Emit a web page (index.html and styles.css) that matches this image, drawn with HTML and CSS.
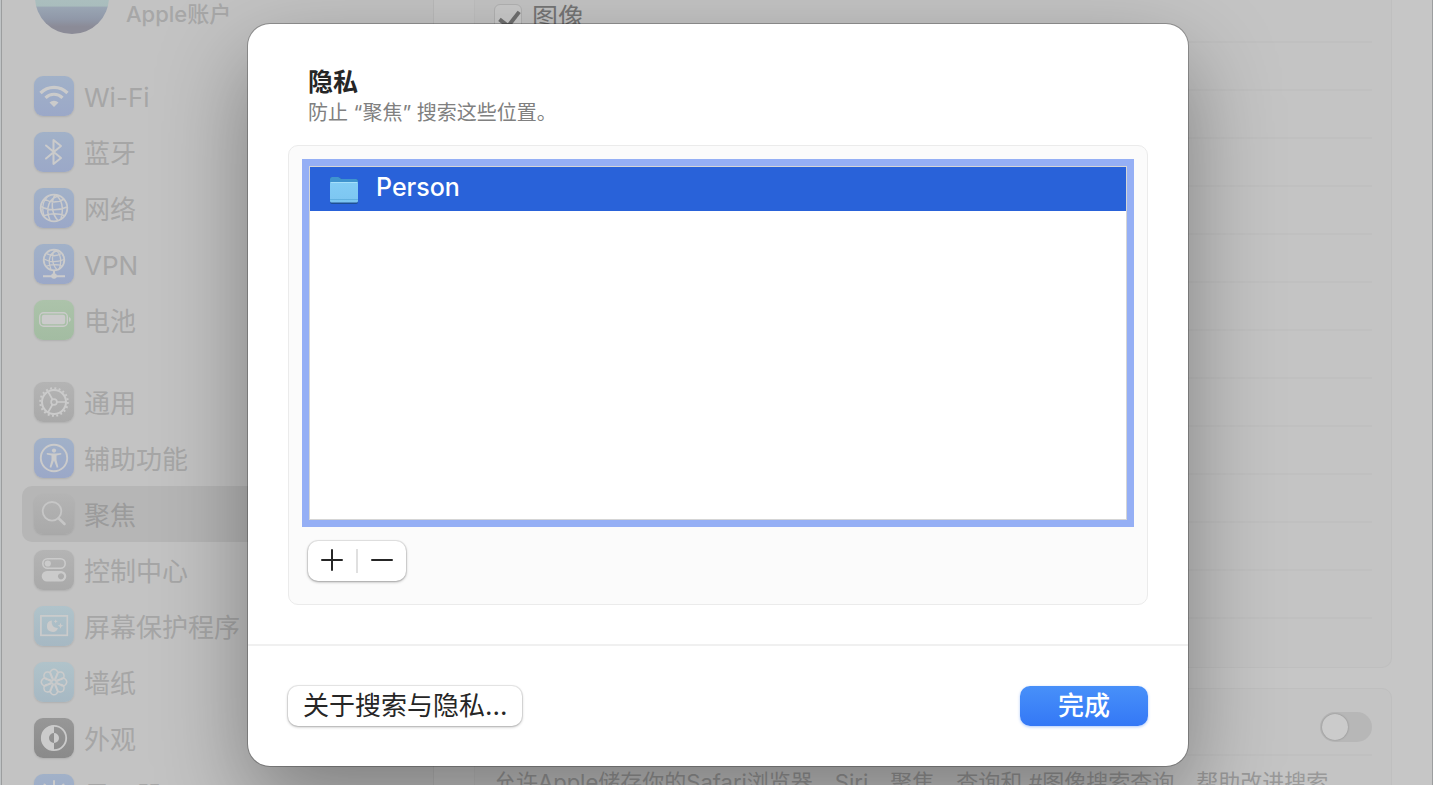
FILE: index.html
```
<!DOCTYPE html>
<html lang="zh-CN">
<head>
  <meta charset="UTF-8" />
  <meta name="viewport" content="width=device-width, initial-scale=1.0" />
  <title>聚焦</title>
  <link rel="stylesheet" href="styles.css">
</head>
<body>
  <div class="window">
    <!-- Sidebar -->
    <nav class="sidebar">
      <a class="account" href="#">
        <span class="avatar"></span>
        <span>Apple账户</span>
      </a>
      <ul class="menu">
        <li><a class="item" href="#">
          <span class="icon blue"><svg viewBox="0 0 40 40"><g fill="none" stroke="#cbcbcb" stroke-width="3.2"><path d="M6.500 17a19 19 0 0 1 27 0"/><path d="M11.500 21.800a12 12 0 0 1 17 0"/></g><path d="M15.500 26.500a6.500 6.500 0 0 1 9 0L20 31z" fill="#cbcbcb"/></svg></span>
          <span class="label">Wi-Fi</span></a></li>
        <li><a class="item" href="#">
          <span class="icon blue"><svg viewBox="0 0 40 40"><path d="M12 13.500l15 12.500-7.500 6V8l7.500 6-15 12.500" fill="none" stroke="#cbcbcb" stroke-width="2" stroke-linejoin="round" stroke-linecap="round"/></svg></span>
          <span class="label">蓝牙</span></a></li>
        <li><a class="item" href="#">
          <span class="icon blue"><svg viewBox="0 0 40 40"><g fill="none" stroke="#cbcbcb" stroke-width="1.500"><circle cx="20" cy="20" r="13.300" stroke-width="1.800"/><path d="M25 7.700C15 10 11 20 16 32.500M21 6.700c-4 7-4 18 3 26M21 6.700c7 4 9 14 6 24M10.500 11c6 4 13 4 20 0M7 18.500c8 4.500 19 4 26 .5M9.500 28c6-3 15-3 21-.5M15 7.500C9 12 7.500 20 10 28"/></g></svg></span>
          <span class="label">网络</span></a></li>
        <li><a class="item" href="#">
          <span class="icon blue"><svg viewBox="0 0 40 40"><g fill="none" stroke="#cbcbcb" stroke-width="1.300"><circle cx="20" cy="16" r="10.300" stroke-width="1.800"/><path d="M24 6.500C16 8 13 16 17 25.500M20.500 5.700c-3 6-3 14 2.500 20M21 5.700c5.500 3 7 11 4.500 18.500M12.500 9.500c5 3 10 3 15 0M10 15c6 3.500 14 3 20 .5M12 22.500c4.500-2.500 11.500-2.500 16-.5"/><path d="M20 26v5M9 32.200h22" stroke-width="2"/></g><circle cx="20" cy="32" r="2.800" fill="#cbcbcb"/></svg></span>
          <span class="label">VPN</span></a></li>
        <li><a class="item" href="#">
          <span class="icon green"><svg viewBox="0 0 40 40"><rect x="5.700" y="12.700" width="27.600" height="13.600" rx="4" fill="none" stroke="#cbcbcb" stroke-width="1.400"/><rect x="7.800" y="14.800" width="23.400" height="9.400" rx="2.200" fill="#cbcbcb"/><path d="M35 17c2.300.8 2.300 4.200 0 5z" fill="#cbcbcb"/></svg></span>
          <span class="label">电池</span></a></li>
      </ul>
      <ul class="menu">
        <li><a class="item" href="#">
          <span class="icon gray"><svg viewBox="0 0 40 40"><g fill="none" stroke="#cbcbcb"><circle cx="20" cy="20" r="13.800" stroke-width="2" stroke-dasharray="1.900 2.435"/><circle cx="20" cy="20" r="12" stroke-width="2"/><circle cx="20" cy="20" r="2.900" stroke-width="1.600"/><path d="M23 20h9M18.500 17.500l-4.500-8M18.500 22.500l-4.500 8" stroke-width="1.700"/></g></svg></span>
          <span class="label">通用</span></a></li>
        <li><a class="item" href="#">
          <span class="icon blue"><svg viewBox="0 0 40 40"><circle cx="20" cy="20" r="13.200" fill="none" stroke="#cbcbcb" stroke-width="1.900"/><circle cx="20" cy="12.600" r="2.100" fill="#cbcbcb"/><path d="M12.800 15l5.200.6h4l5.200-.6v1.500l-4.700 1.100v4.300l1.900 7.400-1.600.5-2.800-7.300-2.800 7.300-1.600-.5 1.900-7.400v-4.300l-4.700-1.100z" fill="#cbcbcb"/></svg></span>
          <span class="label">辅助功能</span></a></li>
        <li><a class="item selected" href="#" aria-current="page">
          <span class="icon gray"><svg viewBox="0 0 40 40"><circle cx="18" cy="17.300" r="9.300" fill="none" stroke="#c6c6c6" stroke-width="1.800"/><path d="M24.500 24.200l6 5.800" stroke="#c6c6c6" stroke-width="2.600" stroke-linecap="round"/></svg></span>
          <span class="label">聚焦</span></a></li>
        <li><a class="item" href="#">
          <span class="icon gray"><svg viewBox="0 0 40 40"><rect x="8.800" y="8.800" width="22.400" height="9.400" rx="4.700" fill="none" stroke="#cbcbcb" stroke-width="1.600"/><circle cx="13.800" cy="13.500" r="3.100" fill="#cbcbcb"/><path d="M13 21h14a5.300 5.300 0 0 1 0 10.600H13A5.300 5.300 0 0 1 13 21zm14 2.200a3.100 3.100 0 1 0 .01 0z" fill="#cbcbcb" fill-rule="evenodd"/></svg></span>
          <span class="label">控制中心</span></a></li>
        <li><a class="item" href="#">
          <span class="icon cyan"><svg viewBox="0 0 40 40"><rect x="6.900" y="9.900" width="26.400" height="19.400" fill="none" stroke="#cbcbcb" stroke-width="1.700"/><path d="M18 14.500a5.700 5.700 0 1 0 6 7.500 5.700 5.700 0 0 1-6-7.500zM21.700 13.300l.6 1.500 1.500.6-1.500.6-.6 1.500-.6-1.500-1.500-.6 1.500-.6zM26.500 16.800l.8 2.200 2.200.8-2.200.8-.8 2.200-.8-2.200-2.200-.8 2.200-.8z" fill="#cbcbcb"/></svg></span>
          <span class="label">屏幕保护程序</span></a></li>
        <li><a class="item" href="#">
          <span class="icon cyan"><svg viewBox="0 0 40 40"><g fill="none" stroke="#cbcbcb" stroke-width="1.400"><g id="petals"><path id="petal" d="M18.500 17.500l-1.700-4.300a3.800 3.800 0 1 1 6.400 0l-1.700 4.300"/><use href="#petal" transform="rotate(45 20 20)"/><use href="#petal" transform="rotate(90 20 20)"/><use href="#petal" transform="rotate(135 20 20)"/></g><use href="#petals" transform="rotate(180 20 20)"/><circle cx="20" cy="20" r="2.300"/></g></svg></span>
          <span class="label">墙纸</span></a></li>
        <li><a class="item" href="#">
          <span class="icon dark"><svg viewBox="0 0 40 40"><circle cx="20" cy="20" r="12.200" fill="none" stroke="#cbcbcb" stroke-width="1.800"/><path d="M20 7.500a12.500 12.500 0 0 0 0 25V25a5 5 0 0 1 0-10zM20 15a5 5 0 0 1 0 10z" fill="#cbcbcb"/></svg></span>
          <span class="label">外观</span></a></li>
        <li><a class="item" href="#">
          <span class="icon blue"><svg viewBox="0 0 40 40"><g fill="none" stroke="#cbcbcb" stroke-width="2" stroke-linecap="round"><path d="M20 7v5M10.500 10.500l3.500 3.500M29.500 10.500L26 14M7 20h5M28 20h5"/><circle cx="20" cy="20" r="5"/></g></svg></span>
          <span class="label">显示器</span></a></li>
      </ul>
    </nav>

    <!-- Search result categories -->
    <main class="content">
      <section class="card">
        <div class="row">
          <input type="checkbox" id="images" class="check" checked>
          <label for="images">图像</label>
        </div>
        <div class="row"></div>
        <div class="row"></div>
        <div class="row"></div>
        <div class="row"></div>
        <div class="row"></div>
        <div class="row"></div>
        <div class="row"></div>
        <div class="row"></div>
        <div class="row"></div>
        <div class="row"></div>
        <div class="row"></div>
        <div class="row"></div>
        <div class="row"></div>
      </section>
      <section class="card">
        <div class="row toggle-row">
          <input type="checkbox" role="switch" class="toggle" aria-labelledby="improve">
        </div>
        <label class="note" id="improve">允许Apple储存你的Safari浏览器、Siri、聚焦、查询和 #图像搜索查询，帮助改进搜索</label>
      </section>
    </main>

    <!-- Privacy sheet -->
    <div class="overlay">
      <div class="sheet" role="dialog" aria-modal="true" aria-labelledby="title">
        <div class="sheet-body">
          <h1 id="title">隐私</h1>
          <p class="subtitle">防止 “聚焦” 搜索这些位置。</p>
          <div class="group">
            <ul class="places" role="listbox" aria-labelledby="title" tabindex="0">
              <li role="option" aria-selected="true">
                <svg class="folder" viewBox="0 0 30 30">
                  <defs>
                    <linearGradient id="front" x1="0" y1="0" x2="0" y2="1">
                      <stop offset="0" stop-color="#83cdf5"/>
                      <stop offset="1" stop-color="#7cc5f1"/>
                    </linearGradient>
                  </defs>
                  <path d="M1 27V4q0-2 2-2h6q1 0 2 1t2 1h14q2 0 2 2v21q0 2-2 2H3q-2 0-2-2z" fill="#1f4f93"/>
                  <path d="M1 24V4q0-2 2-2h6q1 0 2 1t2 1h14q2 0 2 2v18z" fill="#3f94cf"/>
                  <rect x="1" y="7" width="28" height="20.500" rx="1.500" fill="url(#front)"/>
                  <path d="M1.500 7.500h27" stroke="#a5e0fb"/>
                  <path d="M1 24.500h28" stroke="#62b1e0"/>
                </svg>
                Person
              </li>
            </ul>
            <div class="segments">
              <button type="button" aria-label="添加"><svg viewBox="0 0 24 24"><path d="M12 2v20M2 12h20"/></svg></button>
              <span class="separator"></span>
              <button type="button" aria-label="移除"><svg viewBox="0 0 24 24"><path d="M2 12h20"/></svg></button>
            </div>
          </div>
        </div>
        <div class="sheet-footer">
          <button type="button" class="btn">关于搜索与隐私...</button>
          <button type="button" class="btn primary">完成</button>
        </div>
      </div>
    </div>
  </div>
</body>
</html>
```
FILE: styles.css
```
* {
  box-sizing: border-box;
}
body {
  margin: 0;
  height: 100vh;
  overflow: hidden;
  padding-left: 1px;
  background: #bfc3c5;
  font-family: Inter, "Noto Sans CJK SC", sans-serif;
  font-size: 26px;
  line-height: 32px;
}
h1, p, ul {
  margin: 0;
  padding: 0;
}
ul {
  list-style: none;
}
button {
  font: inherit;
  cursor: pointer;
}
.window {
  position: relative;
  display: flex;
  height: 100vh;
  overflow: hidden;
  border: solid #9c9e9f;
  border-width: 0 1px;
}

/* Sidebar */
.sidebar {
  flex: 0 0 432px;
  padding: 0 20px;
  margin-top: -40px;
  background: #c3c3c3;
  border-right: 1px solid #bababa;
}
.account {
  display: flex;
  align-items: center;
  gap: 17px;
  height: 74px;
  margin: 0 0 34px 13px;
  color: #a7a7a7;
  font-size: 22px;
  font-weight: 500;
  text-decoration: none;
}
.account span:last-child {
  padding-top: 34px;
}
.avatar {
  width: 74px;
  height: 74px;
  border-radius: 50%;
  background: linear-gradient(#b5c5c5 0, #a9bdbd 62%, #99a5b3 64%, #9098a8 80%, #8b8b97 90%);
}
.menu + .menu {
  margin-top: 26px;
}
.item {
  display: flex;
  align-items: center;
  gap: 10px;
  height: 56px;
  padding: 0 12px;
  border-radius: 10px;
  color: #a6a6a6;
  text-decoration: none;
}
.item.selected {
  background: #b6b6b6;
  color: #9b9b9b;
}
.label {
  padding-top: 3px;
}
.icon {
  width: 40px;
  height: 40px;
  border-radius: 9px;
  box-shadow: 0 1px 2px rgba(0, 0, 0, 0.1);
}
.icon svg {
  display: block;
}
.blue {
  background: linear-gradient(#a1b1c8, #9ba8c8);
}
.green {
  background: linear-gradient(#acc3aa, #a3bca2);
}
.gray {
  background: linear-gradient(#b4b4b4, #a9a9a9);
}
.cyan {
  background: linear-gradient(#b0c3ca, #a6b8c3);
}
.dark {
  background: linear-gradient(#979797, #8a8a8a);
}

/* Content */
.content {
  flex: 1;
  margin-top: -5px;
  padding: 0 40px;
  background: #c6c6c6;
}
.card {
  margin-bottom: 20px;
  padding: 0 19px;
  border: 1px solid #bfbfbf;
  border-radius: 10px;
  background: #c4c4c4;
}
.card:first-child {
  border-top: 0;
  border-radius: 0 0 10px 10px;
}
.row {
  display: flex;
  align-items: center;
  gap: 10px;
  height: 48px;
  border-bottom: 2px solid #c0c0c0;
  color: #757575;
}
.card:first-child .row:last-child {
  border-bottom: 0;
}
.check {
  appearance: none;
  width: 28px;
  height: 28px;
  margin: 0;
  border: 1px solid #b3b3b3;
  border-radius: 6px;
  background: #cacaca;
}
.check:checked::before {
  content: "";
  display: block;
  width: 9px;
  height: 16px;
  margin: 2px 8px;
  border: solid #707070;
  border-width: 0 4px 4px 0;
  transform: rotate(38deg);
}
.toggle-row {
  height: 67px;
  padding-top: 10px;
  justify-content: flex-end;
}
.toggle {
  appearance: none;
  width: 52px;
  height: 30px;
  margin: 0;
  padding: 2px;
  border-radius: 15px;
  background: #b7b7b7;
}
.toggle::before {
  content: "";
  display: block;
  width: 26px;
  height: 26px;
  border-radius: 50%;
  background: #cbcbcb;
  box-shadow: 0 0 2px rgba(0, 0, 0, 0.3);
}
.note {
  display: block;
  padding-top: 10px;
  font-size: 22px;
  color: #999;
}

/* Privacy sheet */
.overlay {
  position: absolute;
  inset: 0;
  padding: 24px 0 0 2px;
}
.sheet {
  max-width: 940px;
  margin: 0 auto;
  border-radius: 22px;
  background: #fff;
  box-shadow: 0 0 0 1px rgba(0, 0, 0, 0.25), 0 36px 90px rgba(0, 0, 0, 0.36);
}
.sheet-body {
  padding: 41px 40px 39px;
  border-bottom: 2px solid #f0f0f0;
}
h1 {
  padding: 0 20px;
  color: #262626;
  font-size: 25px;
  line-height: 34px;
}
.subtitle {
  padding: 0 20px;
  color: #808080;
  font-size: 20px;
  line-height: 28px;
}
.group {
  margin-top: 18px;
  padding: 20px 20px 23px;
  border: 1px solid #ebebeb;
  border-radius: 10px;
  background: #fbfbfb;
}
.places {
  height: 354px;
  border: 1px solid #d5d5d5;
  background: #fff;
  box-shadow: 0 0 0 7px #95aff5;
  outline: none;
}
.places li {
  display: flex;
  align-items: center;
  gap: 17px;
  height: 44px;
  padding: 0 19px 5px;
  background: #2962d9;
  color: #fff;
  font-size: 25px;
  font-weight: 500;
}
.folder {
  width: 30px;
  height: 30px;
  margin-top: 6px;
}
.segments {
  display: inline-flex;
  align-items: center;
  vertical-align: top;
  margin: 21px 0 0 -1px;
  border-radius: 10px;
  background: #fff;
  box-shadow: 0 0 0 1px rgba(0, 0, 0, 0.07), 0 1px 3px rgba(0, 0, 0, 0.35);
}
.segments button {
  display: flex;
  align-items: center;
  justify-content: center;
  width: 48px;
  height: 40px;
  padding: 0 0 2px;
  border: 0;
  background: none;
}
.separator {
  width: 2px;
  height: 24px;
  background: #e0e0e0;
}
.segments svg {
  width: 24px;
  height: 24px;
  fill: none;
  stroke: #262626;
  stroke-width: 2;
  stroke-linecap: round;
}
.sheet-footer {
  display: flex;
  justify-content: space-between;
  padding: 40px;
}
.btn {
  height: 40px;
  padding: 0 15px;
  border: 0;
  border-radius: 10px;
  background: #fff;
  color: #262626;
  box-shadow: 0 0 0 1px rgba(0, 0, 0, 0.07), 0 1px 3px rgba(0, 0, 0, 0.3);
}
.btn.primary {
  width: 128px;
  background: linear-gradient(#4890f9, #3478f6);
  color: #fff;
  font-weight: 500;
  box-shadow: 0 1px 3px rgba(52, 120, 246, 0.4);
}
```
